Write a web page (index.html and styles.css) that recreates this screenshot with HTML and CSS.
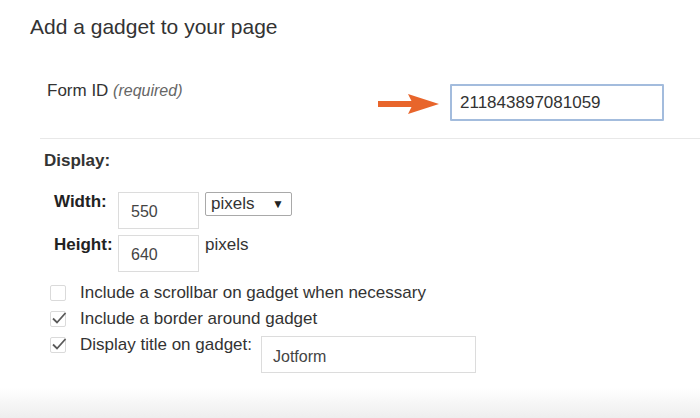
FILE: index.html
```html
<!DOCTYPE html>
<html>
<head>
<meta charset="utf-8">
<link rel="stylesheet" href="styles.css">
</head>
<body>
<div class="page">
  <h1 class="title">Add a gadget to your page</h1>
  <div class="formid">
    <div class="formid-label">Form ID <em>(required)</em></div>
    <svg class="arrow" width="62" height="22" viewBox="0 0 62 22">
      <rect x="0" y="8" width="38" height="6" fill="#e8652b"/>
      <path d="M30 1 L61 11 L30 21 L35 11 Z" fill="#e8652b"/>
    </svg>
    <div class="field field-id">211843897081059</div>
  </div>
  <div class="sep"></div>
  <div class="section-title">Display:</div>
  <div class="dims">
    <div class="dim-label">Width:</div>
    <div class="field dim-input">550</div>
    <div class="select"><span>pixels</span><span class="caret">&#9660;</span></div>
    <div class="dim-label">Height:</div>
    <div class="field dim-input">640</div>
    <div class="unit">pixels</div>
  </div>
  <div class="options">
    <div class="opt"><span class="cb"></span><span>Include a scrollbar on gadget when necessary</span></div>
    <div class="opt"><span class="cb"><svg width="18" height="18" viewBox="0 0 18 18"><path d="M3 9.5 L7 13.5 L15.5 4" fill="none" stroke="#5a5a5a" stroke-width="1.8"/></svg></span><span>Include a border around gadget</span></div>
    <div class="opt"><span class="cb"><svg width="18" height="18" viewBox="0 0 18 18"><path d="M3 9.5 L7 13.5 L15.5 4" fill="none" stroke="#5a5a5a" stroke-width="1.8"/></svg></span><span>Display title on gadget:</span><div class="field field-title">Jotform</div></div>
  </div>
  <div class="footer"></div>
</div>
</body>
</html>
```
FILE: styles.css
```css
html, body {
  margin: 0;
  padding: 0;
  background: #fff;
}
body {
  font-family: "Liberation Sans", Arial, sans-serif;
  color: #333;
}
.page {
  width: 700px;
  height: 418px;
  display: flex;
  flex-direction: column;
  overflow: hidden;
}
.title {
  margin: 0;
  padding: 14px 0 0 30px;
  font-size: 21px;
  line-height: 26px;
  font-weight: normal;
  color: #333;
}
.formid {
  display: flex;
  align-items: flex-start;
  margin-top: 44px;
  padding-left: 47px;
  height: 37px;
}
.formid-label {
  flex: 1;
  font-size: 17px;
  line-height: 20px;
  margin-top: -3px;
  color: #333;
}
.formid-label em {
  font-size: 16px;
  color: #666;
}
.arrow {
  margin-top: 9px;
  margin-right: 10px;
  flex-shrink: 0;
}
.field {
  box-sizing: border-box;
  border: 1px solid #dcdcdc;
  background: #fff;
  color: #444;
}
.field-id {
  width: 214px;
  height: 37px;
  margin-right: 36px;
  border: 2px solid #a3bcdd;
  border-radius: 1px;
  padding: 7px 0 0 8px;
  font-size: 17px;
  line-height: 19px;
  color: #333;
}
.sep {
  margin: 17px 0 0 40px;
  border-top: 1px solid #e8e8e8;
}
.section-title {
  margin-top: 12px;
  padding-left: 44px;
  font-size: 17px;
  line-height: 20px;
  font-weight: bold;
  color: #333;
}
.dims {
  display: grid;
  grid-template-columns: 64px 81px auto;
  row-gap: 6px;
  margin-top: 21px;
  padding-left: 54px;
  justify-content: start;
  align-items: start;
}
.dim-label {
  font-size: 17px;
  line-height: 20px;
  font-weight: bold;
  color: #222;
}
.dim-input {
  height: 37px;
  padding: 10px 0 0 12px;
  font-size: 16px;
  line-height: 18px;
}
.select {
  box-sizing: border-box;
  margin-left: 6px;
  width: 87px;
  height: 24px;
  border: 1px solid #a9a9a9;
  border-radius: 2px;
  padding: 0 7px 0 5px;
  display: flex;
  justify-content: space-between;
  align-items: center;
  font-size: 17px;
  line-height: 22px;
  color: #333;
}
.caret {
  font-size: 12px;
  color: #222;
}
.unit {
  margin-left: 6px;
  font-size: 17px;
  line-height: 20px;
  color: #333;
}
.options {
  margin-top: 8px;
  padding-left: 50px;
}
.opt {
  display: flex;
  align-items: flex-start;
  font-size: 17px;
  line-height: 26px;
  color: #333;
}
.cb {
  box-sizing: border-box;
  width: 16px;
  height: 16px;
  margin-top: 5px;
  margin-right: 14px;
  border: 1px solid #dadada;
  border-radius: 2px;
  background: #fff;
  flex-shrink: 0;
  position: relative;
}
.cb svg {
  position: absolute;
  left: -1px;
  top: -3px;
}
.field-title {
  width: 215px;
  height: 37px;
  margin-left: 9px;
  margin-top: 4px;
  padding: 11px 0 0 11px;
  font-size: 16px;
  line-height: 18px;
}
.footer {
  margin-top: auto;
  height: 30px;
  background: linear-gradient(#ffffff, #eeeeee);
}
```
